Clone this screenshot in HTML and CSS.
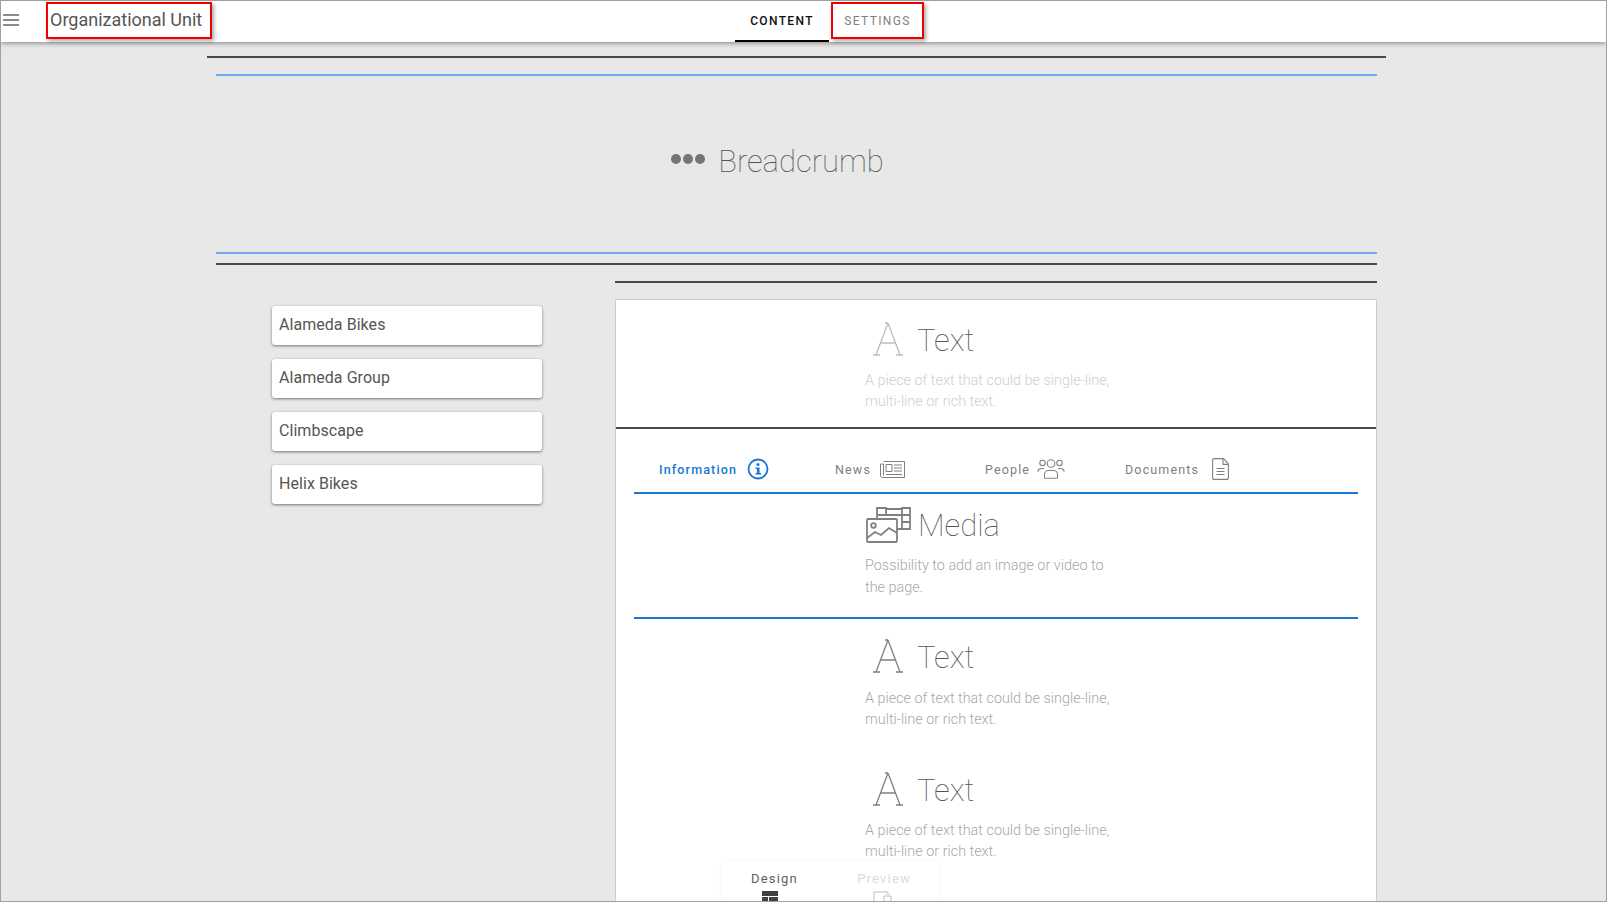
FILE: index.html
```html
<!DOCTYPE html>
<html lang="en">
<head>
<meta charset="utf-8">
<title>Organizational Unit</title>
<link rel="stylesheet" href="styles.css">
</head>
<body>
<div class="app">
  <header class="topbar">
    <svg class="menu" width="16" height="12" viewBox="0 0 16 12"><path d="M0 1h16M0 6h16M0 11h16" stroke="#666" stroke-width="1.4" fill="none"/></svg>
    <div class="title marked">Organizational Unit</div>
    <nav class="tabs">
      <div class="tab active">CONTENT</div>
      <div class="tab marked">SETTINGS</div>
    </nav>
  </header>
  <main class="page">
    <section class="hero">
      <div class="hero-label">
        <svg width="36" height="12" viewBox="0 0 36 12"><circle cx="6" cy="6" r="5" fill="#757575"/><circle cx="18" cy="6" r="5" fill="#757575"/><circle cx="30" cy="6" r="5" fill="#757575"/></svg>
        <span>Breadcrumb</span>
      </div>
    </section>
    <div class="split">
      <aside class="list">
        <div class="card">Alameda Bikes</div>
        <div class="card">Alameda Group</div>
        <div class="card">Climbscape</div>
        <div class="card">Helix Bikes</div>
      </aside>
      <div class="right">
        <div class="panel">
          <div class="block first">
            <div class="block-head">
              <svg class="a-icon faint" width="30" height="34" viewBox="0 0 30 34"><path d="M15 1 3 33M15 1l12 32M7.500 21h15M0 33h7M23 33h7M12 1h3" fill="none" stroke="currentColor" stroke-width="1.300"/></svg>
              <span class="block-name">Text</span>
            </div>
            <p class="desc faint-desc">A piece of text that could be single-line,<br>multi-line or rich text.</p>
          </div>
          <div class="tabbed">
            <div class="tabstrip">
              <div class="t t1 on">Information
                <svg width="22" height="22" viewBox="0 0 22 22"><circle cx="11" cy="11" r="9.500" fill="none" stroke="#1976d2" stroke-width="1.800"/><circle cx="11" cy="6.500" r="1.500" fill="#1976d2"/><path d="M8.500 9.500H12.500V15H14V16.500H8.500V15H10V11H8.500Z" fill="#1976d2"/></svg>
              </div>
              <div class="t t2">News
                <svg width="25" height="17" viewBox="0 0 25 17"><g fill="none" stroke="#808080"><path d="M3.500.5h21v16H2.500a2 2 0 0 1-2-2V3h3"/><path d="M3.500 3v11.500"/><path d="M6 3.500h6v7H6zM14 4h8M14 7h8M14 10h8M6 13.500h16"/></g></svg>
              </div>
              <div class="t t3">People
                <svg width="28" height="20" viewBox="0 0 28 20"><g fill="none" stroke="#808080" stroke-width="1.100"><circle cx="14" cy="4.500" r="3.800"/><circle cx="5.500" cy="4" r="2.700"/><circle cx="22.500" cy="4" r="2.700"/><path d="M7.500 18.500v-3a4 4 0 0 1 4-4h5a4 4 0 0 1 4 4v3a.8.8 0 0 1-.8.8H8.300a.8.8 0 0 1-.8-.8Z"/><path d="M.7 12.500a4 4 0 0 1 4-3h2.300M27.300 12.500a4 4 0 0 0-4-3H21"/></g></svg>
              </div>
              <div class="t t4">Documents
                <svg width="17" height="22" viewBox="0 0 17 22"><g fill="none" stroke="#808080" stroke-width="1.100"><path d="M2 .6h9.500L16.400 6v14a1.400 1.400 0 0 1-1.400 1.400H2A1.400 1.400 0 0 1 .6 20V2A1.400 1.400 0 0 1 2 .6Z"/><path d="M11 .6V6.400h5.400M4.500 10.500h8M4.500 13.500h8M4.500 16.500h8"/></g></svg>
              </div>
            </div>
            <div class="block media">
              <div class="block-head">
                <svg class="media-icon" width="45" height="36" viewBox="0 0 45 36"><g fill="none" stroke="#808080" stroke-width="1.800"><rect x="1" y="12" width="30" height="23" rx="1"/><circle cx="7.500" cy="18.500" r="2.300"/><path d="M1 31l8-6 6 3 8-7 8 5"/><path d="M11 12V8h9V1h-9v7M20 2h16M36 1h8v21h-8zM36 8h8M36 15h8M20 8h16v14h-5"/></g></svg>
                <span class="block-name">Media</span>
              </div>
              <p class="desc">Possibility to add an image or video to<br>the page.</p>
            </div>
            <div class="block lower">
              <div class="block-head">
                <svg class="a-icon" width="30" height="34" viewBox="0 0 30 34"><path d="M15 1 3 33M15 1l12 32M7.500 21h15M0 33h7M23 33h7M12 1h3" fill="none" stroke="currentColor" stroke-width="1.300"/></svg>
                <span class="block-name">Text</span>
              </div>
              <p class="desc">A piece of text that could be single-line,<br>multi-line or rich text.</p>
            </div>
            <div class="block lower second">
              <div class="block-head">
                <svg class="a-icon" width="30" height="34" viewBox="0 0 30 34"><path d="M15 1 3 33M15 1l12 32M7.500 21h15M0 33h7M23 33h7M12 1h3" fill="none" stroke="currentColor" stroke-width="1.300"/></svg>
                <span class="block-name">Text</span>
              </div>
              <p class="desc">A piece of text that could be single-line,<br>multi-line or rich text.</p>
            </div>
          </div>
        </div>
      </div>
    </div>
  </main>
  <div class="switcher">
    <div class="mode">Design
      <svg class="mode-icon" width="16" height="16" viewBox="0 0 16 16"><path d="M0 0h16v5H0zM0 6h6v10H0zM7 6h9v4H7zM7 11h4v5H7zM12 11h4v5h-4z" fill="#424242"/></svg>
    </div>
    <div class="mode off">Preview
      <svg class="mode-icon" width="20" height="16" viewBox="0 0 20 16"><path d="M1 16V1h14v3M11 5h7v11h-7z" fill="none" stroke="#bdbdbd"/></svg>
    </div>
  </div>
</div>
</body>
</html>
```

FILE: styles.css
```css
* { box-sizing: border-box; }
html, body { margin: 0; height: 100%; overflow: hidden; }
body { font-family: Roboto, "Liberation Sans", sans-serif; color: #424242; }

.app {
  position: relative;
  width: 1607px;
  height: 902px;
  overflow: hidden;
  background: #e8e8e8;
  border: 1px solid #a0a0a0;
}

.topbar {
  position: relative;
  z-index: 1;
  display: flex;
  align-items: flex-start;
  height: 41px;
  background: #fff;
  box-shadow: 0 1px 5px rgba(0, 0, 0, .45);
}
.menu { margin: 13px 0 0 2px; flex: none; }
.marked {
  border: 2px solid #f00000;
  box-shadow: 2px 2px 4px rgba(0, 0, 0, .35);
}
.title {
  width: 166px;
  height: 37px;
  margin: 1px 0 0 27px;
  padding-left: 2px;
  font-size: 18px;
  line-height: 32px;
  color: #555;
}
.tabs { display: flex; margin-left: 523px; height: 41px; }
.tab {
  font-size: 12px;
  font-weight: 500;
  letter-spacing: 1.35px;
  text-align: center;
}
.tab.active {
  width: 94px;
  color: #111;
  line-height: 40px;
  border-bottom: 2px solid #000;
}
.tab.marked {
  width: 93px;
  height: 37px;
  margin: 1px 0 0 2px;
  color: #808080;
  font-weight: 400;
  line-height: 35px;
}

.page {
  width: 1179px;
  margin: 14px 0 0 206px;
  padding: 0 9px;
  border-top: 2px solid #4a4a4a;
}
.hero {
  display: flex;
  align-items: center;
  justify-content: center;
  height: 180px;
  margin-top: 16px;
  border-top: 2px solid #6ea8f7;
  border-bottom: 2px solid #6ea8f7;
}
.hero-label { display: flex; align-items: center; gap: 12px; margin: 0 0 6px -39px; color: #757575; }
.hero-label svg { margin-bottom: 4px; }
.hero-label span { margin-top: 2px; font-size: 31px; font-weight: 100; line-height: 40px; color: #555; }

.split {
  display: flex;
  margin-top: 9px;
  border-top: 2px solid #4a4a4a;
}
.list {
  width: 399px;
  flex: none;
  padding: 41px 0 0 56px;
}
.card {
  width: 270px;
  height: 39px;
  margin-bottom: 14px;
  padding-left: 7px;
  background: #fff;
  border-radius: 3px;
  box-shadow: 0 1px 3px rgba(0, 0, 0, .5);
  font-size: 16px;
  letter-spacing: .05px;
  line-height: 37px;
  color: #555;
}
.right {
  flex: 1;
  margin-top: 16px;
  padding-top: 16px;
  border-top: 2px solid #4a4a4a;
}
.panel {
  height: 700px;
  background: #fff;
  border: 1px solid #ccc;
}

.block { padding-left: 249px; }
.block-head { display: flex; align-items: center; height: 40px; color: #808080; }
.block-name { margin-top: 2px; font-size: 31px; font-weight: 100; color: #555; line-height: 40px; }
.a-icon { margin: -2px 14px 0 8px; flex: none; color: #808080; }
.a-icon.faint { color: #bdbdbd; }
.desc {
  margin: 10px 0 0;
  font-size: 14.400px;
  font-weight: 300;
  line-height: 21px;
  color: #a8a8a8;
}
.faint-desc { color: #cfcfcf; }
.first { height: 129px; padding-top: 20px; border-bottom: 2px solid #4a4a4a; }

.tabbed { padding: 0 18px; }
.tabbed .block { padding-left: 231px; }
.tabstrip {
  position: relative;
  height: 65px;
  border-bottom: 2px solid #1976d2;
}
.t {
  position: absolute;
  top: 20px;
  display: flex;
  align-items: center;
  height: 40px;
  gap: 9px;
  font-size: 12.500px;
  letter-spacing: 1.150px;
  color: #808080;
}
.t.on { color: #1976d2; font-weight: 500; gap: 10px; }
.t1 { left: 25px; }
.t2 { left: 201px; }
.t3 { left: 351px; gap: 7px; }
.t4 { left: 491px; gap: 13px; }
.media { height: 125px; padding-top: 12px; border-bottom: 2px solid #1976d2; }
.media .desc { margin-top: 9px; line-height: 22px; }
.media .block-name { margin-top: 0; }
.lower { padding-top: 18px; height: 135px; }
.lower .desc { margin-top: 11px; }
.second { padding-top: 16px; }
.second .desc { margin-top: 10px; }
.media-icon { margin: -3px 7px 0 1px; flex: none; }

.switcher {
  position: absolute;
  left: 720px;
  bottom: -1px;
  display: flex;
  justify-content: space-between;
  width: 218px;
  height: 42px;
  padding: 11px 28px 0 30px;
  background: #fff;
  border-radius: 8px 8px 0 0;
  box-shadow: 0 0 2px rgba(0, 0, 0, .08);
}
.mode {
  display: flex;
  flex-direction: column;
  align-items: center;
  gap: 4px;
  font-size: 13px;
  letter-spacing: 1.200px;
  line-height: 16px;
  color: #616161;
}
.mode.off { color: #dcdcdc; }
.mode-icon { flex: none; margin-left: -8px; }
.mode.off .mode-icon { margin-left: -2px; }
```
